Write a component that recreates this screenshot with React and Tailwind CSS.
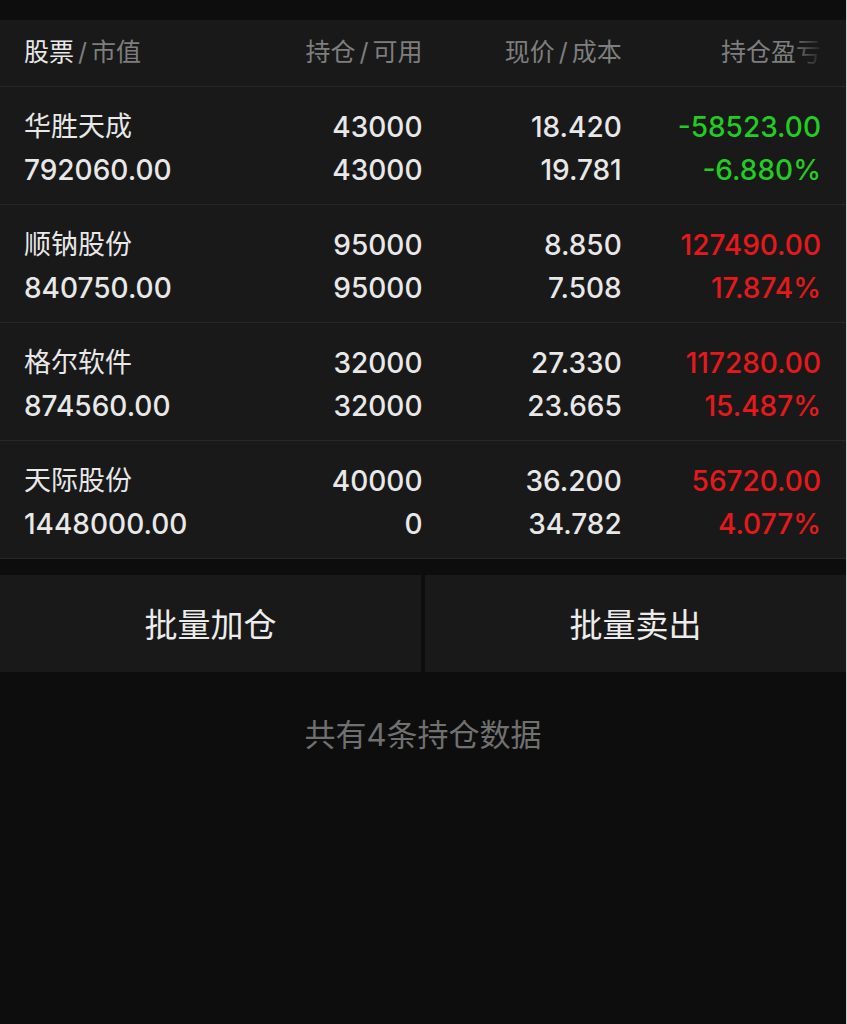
import React from 'react';

const rows = [
  { name: '华胜天成', value: '792060.00', hold: '43000', avail: '43000', price: '18.420', cost: '19.781', pl: '-58523.00', pct: '-6.880%', up: false },
  { name: '顺钠股份', value: '840750.00', hold: '95000', avail: '95000', price: '8.850', cost: '7.508', pl: '127490.00', pct: '17.874%', up: true },
  { name: '格尔软件', value: '874560.00', hold: '32000', avail: '32000', price: '27.330', cost: '23.665', pl: '117280.00', pct: '15.487%', up: true },
  { name: '天际股份', value: '1448000.00', hold: '40000', avail: '0', price: '36.200', cost: '34.782', pl: '56720.00', pct: '4.077%', up: true },
];

const font = { fontFamily: 'Inter, "Noto Sans CJK SC", sans-serif' };

function Row({ r }) {
  const color = r.up ? 'text-[#e5191b]' : 'text-[#22cc22]';
  return (
    <div className="grid grid-cols-4 pl-6 pr-[25px] pt-[21px] pb-[13px] border-b border-[#262626] text-[28px] font-medium text-[#e8e8e8]">
      <div className="flex flex-col">
        <span className="h-[44px] leading-[38px] text-[27px] font-normal">{r.name}</span>
        <span className="h-[39px] leading-[37px]">{r.value}</span>
      </div>
      <div className="flex flex-col items-end">
        <span className="h-[44px] leading-[38px]">{r.hold}</span>
        <span className="h-[39px] leading-[37px]">{r.avail}</span>
      </div>
      <div className="flex flex-col items-end">
        <span className="h-[44px] leading-[38px]">{r.price}</span>
        <span className="h-[39px] leading-[37px]">{r.cost}</span>
      </div>
      <div className={`flex flex-col items-end ${color}`}>
        <span className="h-[44px] leading-[38px]">{r.pl}</span>
        <span className="h-[39px] leading-[37px]">{r.pct}</span>
      </div>
    </div>
  );
}

function Head({ a, b, white }) {
  return (
    <>
      <span className={white ? 'text-[#e8e8e8]' : ''}>{a}</span>
      <span className="mx-1">/</span>
      {b}
    </>
  );
}

export default function App() {
  return (
    <div className="min-h-[1024px] w-[847px] bg-[#0d0d0d] border-r border-[#cfcfcf]" style={font}>
      <div className="h-5" />
      <div className="bg-[#191919]">
        <div className="relative grid grid-cols-4 pl-6 pr-[25px] h-[67px] items-center border-b border-[#262626] text-[25px] text-[#7e7e7e]">
          <div>
            <Head a="股票" b="市值" white />
          </div>
          <div className="text-right">
            <Head a="持仓" b="可用" />
          </div>
          <div className="text-right">
            <Head a="现价" b="成本" />
          </div>
          <div className="text-right">持仓盈亏</div>
          <div className="absolute right-0 top-0 bottom-[1px] w-[56px] bg-gradient-to-r from-transparent via-[#191919]/80 to-[#191919]" />
        </div>
        {rows.map((r) => (
          <Row key={r.name} r={r} />
        ))}
      </div>
      <div className="h-4" />
      <div className="flex h-[97px] gap-1 text-[33px] text-[#ececec]">
        <button className="flex-1 bg-[#191919] flex items-center justify-center pt-1">批量加仓</button>
        <button className="flex-1 bg-[#191919] flex items-center justify-center pt-1">批量卖出</button>
      </div>
      <div className="pt-[40px] text-center text-[31px] text-[#707070]">共有4条持仓数据</div>
    </div>
  );
}
